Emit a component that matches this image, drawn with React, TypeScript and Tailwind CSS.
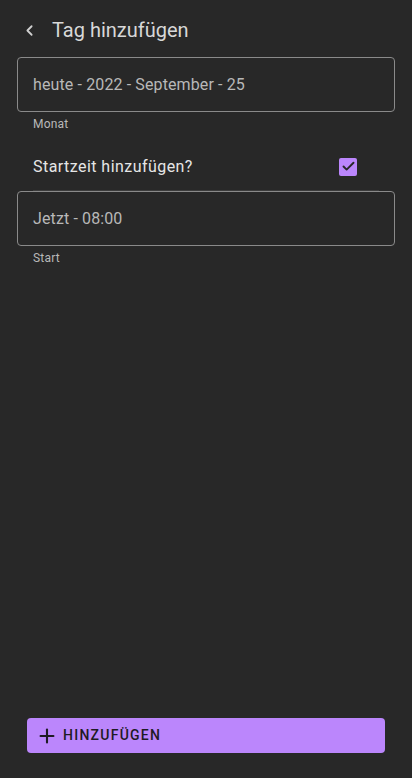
import { Check, ChevronLeft, Plus } from "lucide-react"

type FieldProps = {
  value: string
  helper: string
}

function OutlinedField({ value, helper }: FieldProps) {
  return (
    <div>
      <div className="flex h-[55px] items-center rounded-[4px] border border-[#8a8a8a] px-[15px] pt-[1px]">
        <span className="text-[16px] tracking-[0.12px] text-[#b8b8b8]">{value}</span>
      </div>
      <p className="mt-[5px] pl-[16px] text-[12px] leading-[14px] tracking-[0.2px] text-[#b8b8b8]">{helper}</p>
    </div>
  )
}

export default function App() {
  return (
    <main
      className="flex h-[778px] w-full flex-col bg-[#282828] text-[#e6e6e6]"
      style={{ fontFamily: "Roboto, 'Noto Sans', sans-serif" }}
    >
      <header className="flex h-[57px] items-center pl-[21px] pt-[3px]">
        <ChevronLeft className="h-[17px] w-[17px] text-[#d0d0d0]" strokeWidth={2.5} />
        <h1 className="ml-[14px] text-[20px] text-[#d8d8d8]">Tag hinzufügen</h1>
      </header>

      <section className="flex flex-col px-[17px]">
        <OutlinedField value="heute - 2022 - September - 25" helper="Monat" />

        <div className="mx-[16px] mt-[14px] flex h-[46px] items-center justify-between border-b border-[#3c3c3c] pb-[2px]">
          <span className="text-[16px] tracking-[0.45px] text-[#e6e6e6]">Startzeit hinzufügen?</span>
          <span className="mr-[22px] grid h-[18px] w-[18px] place-items-center rounded-[2px] bg-[#bb86fc]">
            <Check className="h-[15px] w-[15px] text-[#282828]" strokeWidth={3} />
          </span>
        </div>

        <OutlinedField value="Jetzt - 08:00" helper="Start" />
      </section>

      <div className="mt-auto px-[27px] pb-[25px]">
        <button
          type="button"
          className="flex h-[35px] w-full items-center gap-[5px] rounded-[4px] bg-[#bb86fc] pl-[9px] text-[#1e1a24]"
        >
          <Plus className="h-[22px] w-[22px]" strokeWidth={2.3} />
          <span className="text-[14px] font-medium tracking-[1.25px]">HINZUFÜGEN</span>
        </button>
      </div>
    </main>
  )
}
